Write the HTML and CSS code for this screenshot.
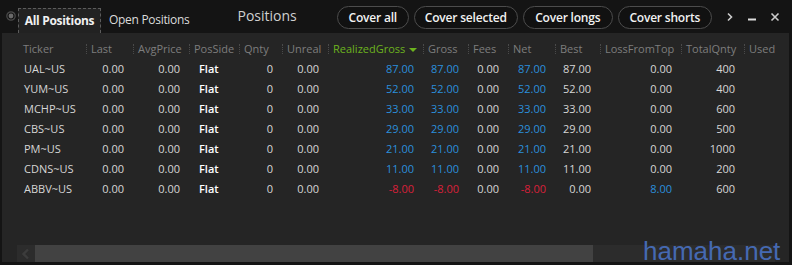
FILE: index.html
```html
<!DOCTYPE html>
<html lang="en">
<head>
<meta charset="UTF-8">
<title>Positions</title>
<link rel="stylesheet" href="styles.css">
</head>
<body>
<div class="window">
    <div class="topbar">
        <svg class="radio" width="10" height="10" viewBox="0 0 10 10">
            <circle cx="5" cy="5" r="4.2" fill="none" stroke="#4a4a4a" stroke-width="1.2"/>
            <circle cx="5" cy="5" r="2.4" fill="#6a6a6a"/>
        </svg>
        <div class="tab active">All Positions</div>
        <div class="tab">Open Positions</div>
        <div class="title">Positions</div>
        <div class="buttons">
            <button class="pill w-all">Cover all</button>
            <button class="pill w-sel">Cover selected</button>
            <button class="pill w-long">Cover longs</button>
            <button class="pill w-short">Cover shorts</button>
        </div>
        <div class="controls">
            <svg width="8" height="10" viewBox="0 0 8 10"><path d="M2 1.5 L5.5 5 L2 8.5" fill="none" stroke="#ccc" stroke-width="1.6"/></svg>
            <svg width="10" height="10" viewBox="0 0 10 10"><path d="M1 7.5 H9" stroke="#ddd" stroke-width="2"/></svg>
            <svg width="10" height="10" viewBox="0 0 10 10"><path d="M1.5 1.5 L8.5 8.5 M8.5 1.5 L1.5 8.5" stroke="#ccc" stroke-width="1.6"/></svg>
        </div>
    </div>

    <div class="panel">
        <div class="row head">
            <div class="c first">Ticker</div>
            <div class="c">Last</div>
            <div class="c">AvgPrice</div>
            <div class="c">PosSide</div>
            <div class="c">Qnty</div>
            <div class="c">Unreal</div>
            <div class="c sorted">RealizedGross <span class="arrow"></span></div>
            <div class="c">Gross</div>
            <div class="c">Fees</div>
            <div class="c">Net</div>
            <div class="c">Best</div>
            <div class="c">LossFromTop</div>
            <div class="c">TotalQnty</div>
            <div class="c">Used</div>
        </div>

        <div class="row">
            <div class="c first">UAL~US</div><div class="c">0.00</div><div class="c">0.00</div><div class="c side">Flat</div><div class="c">0</div><div class="c">0.00</div>
            <div class="c pos">87.00</div><div class="c pos">87.00</div><div class="c">0.00</div><div class="c pos">87.00</div><div class="c">87.00</div><div class="c">0.00</div><div class="c">400</div><div class="c"></div>
        </div>
        <div class="row">
            <div class="c first">YUM~US</div><div class="c">0.00</div><div class="c">0.00</div><div class="c side">Flat</div><div class="c">0</div><div class="c">0.00</div>
            <div class="c pos">52.00</div><div class="c pos">52.00</div><div class="c">0.00</div><div class="c pos">52.00</div><div class="c">52.00</div><div class="c">0.00</div><div class="c">400</div><div class="c"></div>
        </div>
        <div class="row">
            <div class="c first">MCHP~US</div><div class="c">0.00</div><div class="c">0.00</div><div class="c side">Flat</div><div class="c">0</div><div class="c">0.00</div>
            <div class="c pos">33.00</div><div class="c pos">33.00</div><div class="c">0.00</div><div class="c pos">33.00</div><div class="c">33.00</div><div class="c">0.00</div><div class="c">600</div><div class="c"></div>
        </div>
        <div class="row">
            <div class="c first">CBS~US</div><div class="c">0.00</div><div class="c">0.00</div><div class="c side">Flat</div><div class="c">0</div><div class="c">0.00</div>
            <div class="c pos">29.00</div><div class="c pos">29.00</div><div class="c">0.00</div><div class="c pos">29.00</div><div class="c">29.00</div><div class="c">0.00</div><div class="c">500</div><div class="c"></div>
        </div>
        <div class="row">
            <div class="c first">PM~US</div><div class="c">0.00</div><div class="c">0.00</div><div class="c side">Flat</div><div class="c">0</div><div class="c">0.00</div>
            <div class="c pos">21.00</div><div class="c pos">21.00</div><div class="c">0.00</div><div class="c pos">21.00</div><div class="c">21.00</div><div class="c">0.00</div><div class="c">1000</div><div class="c"></div>
        </div>
        <div class="row">
            <div class="c first">CDNS~US</div><div class="c">0.00</div><div class="c">0.00</div><div class="c side">Flat</div><div class="c">0</div><div class="c">0.00</div>
            <div class="c pos">11.00</div><div class="c pos">11.00</div><div class="c">0.00</div><div class="c pos">11.00</div><div class="c">11.00</div><div class="c">0.00</div><div class="c">200</div><div class="c"></div>
        </div>
        <div class="row">
            <div class="c first">ABBV~US</div><div class="c">0.00</div><div class="c">0.00</div><div class="c side">Flat</div><div class="c">0</div><div class="c">0.00</div>
            <div class="c neg">-8.00</div><div class="c neg">-8.00</div><div class="c">0.00</div><div class="c neg">-8.00</div><div class="c">0.00</div><div class="c pos">8.00</div><div class="c">600</div><div class="c"></div>
        </div>

        <div class="hscroll">
            <div class="sbtn">
                <svg width="10" height="12" viewBox="0 0 10 12"><path d="M7 1.5 L2.5 6 L7 10.5" fill="none" stroke="#3c3c3c" stroke-width="2.4"/></svg>
            </div>
            <div class="thumb"></div>
            <div class="track"></div>
        </div>
    </div>

    <div class="watermark">hamaha.net</div>
</div>
</body>
</html>
```

FILE: styles.css
```css
body {
    margin: 0;
    background-color: #141414;
    font-family: "Open Sans", "Noto Sans", sans-serif;
    font-size: 11px;
    color: #d6d6d6;
}
.window {
    position: relative;
    width: 792px;
    height: 265px;
    overflow: hidden;
}
.topbar {
    height: 33px;
    display: flex;
    align-items: flex-end;
    white-space: nowrap;
}
.topbar > * {
    flex-shrink: 0;
}
.radio {
    margin: 0 2px 12px 6px;
}
.tab {
    height: 25px;
    line-height: 24px;
    padding: 0 7px;
    box-sizing: border-box;
    font-size: 12px;
    letter-spacing: -0.3px;
    color: #dcdcdc;
}
.tab.active {
    background-color: #222;
    border: 1px dashed #5c5c5c;
    border-bottom: none;
    font-weight: bold;
    color: #f0f0f0;
    width: 83px;
    padding: 0;
    text-align: center;
    margin-right: 1px;
}
.title {
    align-self: center;
    margin-left: 41px;
    font-size: 14px;
    color: #d0d0d0;
    padding-bottom: 2px;
}
.buttons {
    display: flex;
    gap: 5px;
    margin-left: 40px;
    align-self: flex-start;
    margin-top: 6px;
}
.pill {
    height: 23px;
    padding: 0;
    border: 1.5px solid #4c4c4c;
    border-radius: 12px;
    background-color: #111;
    color: #f2f2f2;
    font-family: "Open Sans", sans-serif;
    font-size: 12px;
    font-weight: 600;
    letter-spacing: -0.2px;
    line-height: 19px;
    white-space: nowrap;
}
.w-all { width: 72px; }
.w-sel { width: 104px; }
.w-long { width: 90px; }
.w-short { width: 94px; }
.controls {
    display: flex;
    align-items: center;
    gap: 13px;
    align-self: flex-start;
    margin: 12px 0 0 14px;
}
.panel {
    position: relative;
    margin: 0 3px 0 2px;
    height: 229px;
    background-color: #252525;
    padding-top: 5px;
    box-sizing: border-box;
    display: flex;
    flex-direction: column;
}
.row {
    display: grid;
    grid-template-columns: 84px 47px 56px 50px 43px 46px 95px 45px 40px 47px 45px 81px 63px 1fr;
    height: 20px;
    line-height: 20px;
    white-space: nowrap;
}
.row .c {
    text-align: right;
    padding-right: 9px;
    overflow: hidden;
}
.row .c.first {
    text-align: left;
    padding-left: 22px;
}
.row .c.side {
    text-align: left;
    padding-left: 10px;
    color: #fff;
    font-weight: 600;
}
.row .c.pos {
    color: #2b8fdc;
}
.row .c.neg {
    color: #d8203a;
}
.row.head {
    height: 21px;
    line-height: 21px;
    color: #7d7d7d;
}
.row.head .c {
    position: relative;
    text-align: left;
    padding: 0 0 0 5px;
}
.row.head .c::before {
    content: "";
    position: absolute;
    left: 0;
    top: 6px;
    height: 10px;
    border-left: 1px dotted #4a4a4a;
}
.row.head .c.first {
    padding-left: 21px;
}
.row.head .c.first::before {
    display: none;
}
.row.head .c.sorted {
    color: #6cb31e;
}
.arrow {
    display: inline-block;
    width: 0;
    height: 0;
    border-left: 4px solid transparent;
    border-right: 4px solid transparent;
    border-top: 4px solid #6cb31e;
    vertical-align: middle;
    margin-left: 1px;
}
.hscroll {
    margin: auto 14px 0 15px;
    height: 17px;
    display: flex;
}
.sbtn {
    width: 18px;
    background-color: #2c2c2c;
    display: flex;
    align-items: center;
    justify-content: center;
}
.thumb {
    width: 558px;
    background-color: #424242;
}
.track {
    flex: 1;
    background-color: #2c2c2c;
}
.watermark {
    position: absolute;
    left: 643px;
    top: 238px;
    font-family: "Liberation Sans", Arial, sans-serif;
    font-size: 26px;
    line-height: 26px;
    color: #4569b2;
}
```
